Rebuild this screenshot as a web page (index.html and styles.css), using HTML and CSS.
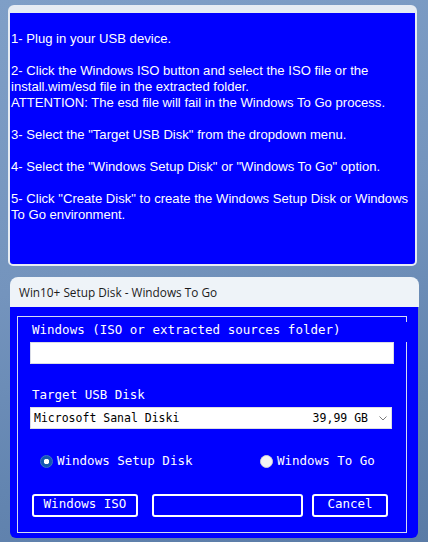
FILE: index.html
```html
<!DOCTYPE html>
<html>
<head>
<meta charset="utf-8">
<title>Win10+ Setup Disk</title>
<link rel="stylesheet" href="styles.css">
</head>
<body>
<div class="desktop">
  <section class="help-window">
    <div class="help-text">
      <p>1- Plug in your USB device.</p>
      <p>2- Click the Windows ISO button and select the ISO file or the<br>install.wim/esd file in the extracted folder.<br>ATTENTION: The esd file will fail in the Windows To Go process.</p>
      <p>3- Select the "Target USB Disk" from the dropdown menu.</p>
      <p>4- Select the "Windows Setup Disk" or "Windows To Go" option.</p>
      <p>5- Click "Create Disk" to create the Windows Setup Disk or Windows<br>To Go environment.</p>
    </div>
  </section>

  <section class="app-window">
    <header class="titlebar">Win10+ Setup Disk - Windows To Go</header>
    <div class="app-body">
      <div class="group">
        <div class="label label-iso">Windows (ISO or extracted sources folder)</div>
        <div class="textbox"></div>
        <div class="label label-target">Target USB Disk</div>
        <div class="combo">
          <span class="combo-name">Microsoft Sanal Diski</span>
          <span class="combo-size">39,99 GB</span>
          <svg class="chevron" width="8" height="5" viewBox="0 0 8 5"><polyline points="0.5,0.5 4,4 7.5,0.5" fill="none" stroke="#7a7a7a" stroke-width="1"/></svg>
        </div>
        <div class="radios">
          <div class="radio radio-setup"><span class="dot dot-checked"></span>Windows Setup Disk</div>
          <div class="radio"><span class="dot"></span>Windows To Go</div>
        </div>
        <div class="buttons">
          <div class="btn btn-iso">Windows ISO</div>
          <div class="btn btn-create"></div>
          <div class="btn btn-cancel">Cancel</div>
        </div>
      </div>
    </div>
  </section>
</div>
</body>
</html>
```

FILE: styles.css
```css
html, body {
  margin: 0;
  padding: 0;
}

body {
  width: 428px;
  height: 542px;
  overflow: hidden;
  background: linear-gradient(165deg, #7f9fc7 0%, #7494bd 45%, #6385b0 75%, #5a7ba6 100%);
}

.desktop {
  display: flex;
  flex-direction: column;
  padding-top: 5px;
}

/* ---------- help window ---------- */
.help-window {
  margin-left: 8px;
  width: 405px;
  height: 251px;
  background: #0000ff;
  border: 2px solid #e6ecf3;
  border-top-width: 8px;
  border-radius: 6px 6px 5px 5px;
}

.help-text {
  padding: 18px 0 0 1px;
  font: 13.1px/16px "Liberation Sans", Arial, sans-serif;
  color: #ffffff;
  white-space: nowrap;
}

.help-text p {
  margin: 0 0 16px;
}

/* ---------- app window ---------- */
.app-window {
  margin: 11px 0 0 10px;
  width: 409px;
}

.titlebar {
  height: 30px;
  padding-left: 9px;
  background: #eef3f8;
  border-radius: 8px 8px 0 0;
  font: 11.8px/30px "Open Sans", "Noto Sans", sans-serif;
  color: #1b1b1b;
}

.app-body {
  box-sizing: border-box;
  width: 408px;
  height: 231px;
  padding: 9px 11px 5px 7px;
  background: #0000ff;
  border-radius: 0 0 6px 6px;
}

.group {
  box-sizing: border-box;
  height: 100%;
  border: 1px solid #d4dbf2;
}

.label {
  margin-left: 14px;
  padding-bottom: 4px;
  font: 12.5px/16px "DejaVu Sans Mono", "Liberation Mono", monospace;
  color: #ffffff;
  white-space: nowrap;
}

.label-iso {
  margin-top: 5px;
  margin-right: -3px;
  background: #0000ff;
}

.label-target {
  margin-top: 23px;
}

.textbox {
  box-sizing: border-box;
  margin-left: 12px;
  width: 364px;
  height: 22px;
  background: #ffffff;
  border: 1px solid #d8dbe6;
}

.combo {
  box-sizing: border-box;
  display: flex;
  align-items: center;
  margin-left: 12px;
  width: 362px;
  height: 22px;
  padding: 1px 4px 0 3px;
  background: #ffffff;
  border: 1px solid #dcdde3;
  font: 11.5px/19px "DejaVu Sans Mono", "Liberation Mono", monospace;
  color: #000000;
  white-space: nowrap;
}

.combo-name {
  flex: 1;
}

.chevron {
  margin-left: 11px;
  margin-top: -1px;
}

.radios {
  display: flex;
  margin-top: 24px;
  margin-left: 22px;
  height: 16px;
}

.radio {
  display: flex;
  align-items: center;
  gap: 4px;
  font: 12.5px/16px "DejaVu Sans Mono", "Liberation Mono", monospace;
  color: #ffffff;
  white-space: nowrap;
}

.radio-setup {
  width: 220px;
}

.dot {
  box-sizing: border-box;
  width: 13px;
  height: 13px;
  border-radius: 50%;
  background: #f4f4f4;
  border: 1px solid #d0d0d8;
}

.dot-checked {
  background: radial-gradient(circle, #ffffff 0 2.5px, #1458b0 3px);
  border: 1px solid #3b74c4;
}

.buttons {
  display: flex;
  margin-top: 25px;
  margin-left: 14px;
}

.btn {
  box-sizing: border-box;
  height: 23px;
  padding-bottom: 3px;
  border: 2px solid #ffffff;
  border-radius: 3px;
  font: 12.5px/16px "DejaVu Sans Mono", "Liberation Mono", monospace;
  color: #ffffff;
  text-align: center;
  white-space: nowrap;
}

.btn-iso {
  width: 106px;
}

.btn-create {
  width: 151px;
  margin-left: 14px;
}

.btn-cancel {
  width: 76px;
  margin-left: 9px;
}
```
